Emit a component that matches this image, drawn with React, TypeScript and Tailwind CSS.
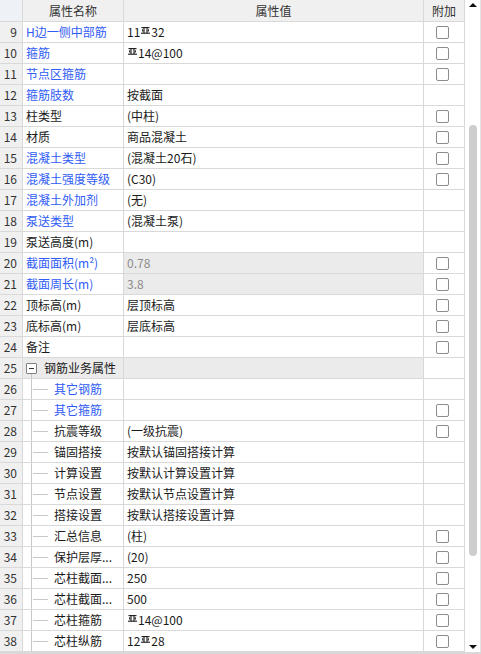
import React from "react";

type Part = string | { sym: true };
type Row = {
  n: number;
  name: string;
  blue?: boolean;
  value?: Part[];
  cb?: boolean;
  gray?: boolean;
  child?: boolean;
  group?: boolean;
};

const S: Part = { sym: true };

const rows: Row[] = [
  { n: 9, name: "H边一侧中部筋", blue: true, value: ["11", S, "32"], cb: true },
  { n: 10, name: "箍筋", blue: true, value: [S, "14@100"], cb: true },
  { n: 11, name: "节点区箍筋", blue: true, value: [], cb: true },
  { n: 12, name: "箍筋肢数", blue: true, value: ["按截面"] },
  { n: 13, name: "柱类型", value: ["(中柱)"], cb: true },
  { n: 14, name: "材质", value: ["商品混凝土"], cb: true },
  { n: 15, name: "混凝土类型", blue: true, value: ["(混凝土20石)"], cb: true },
  { n: 16, name: "混凝土强度等级", blue: true, value: ["(C30)"], cb: true },
  { n: 17, name: "混凝土外加剂", blue: true, value: ["(无)"] },
  { n: 18, name: "泵送类型", blue: true, value: ["(混凝土泵)"] },
  { n: 19, name: "泵送高度(m)", value: [] },
  { n: 20, name: "截面面积(m²)", blue: true, value: ["0.78"], gray: true, cb: true },
  { n: 21, name: "截面周长(m)", blue: true, value: ["3.8"], gray: true, cb: true },
  { n: 22, name: "顶标高(m)", value: ["层顶标高"], cb: true },
  { n: 23, name: "底标高(m)", value: ["层底标高"], cb: true },
  { n: 24, name: "备注", value: [], cb: true },
  { n: 25, name: "钢筋业务属性", group: true },
  { n: 26, name: "其它钢筋", blue: true, child: true, value: [] },
  { n: 27, name: "其它箍筋", blue: true, child: true, value: [], cb: true },
  { n: 28, name: "抗震等级", child: true, value: ["(一级抗震)"], cb: true },
  { n: 29, name: "锚固搭接", child: true, value: ["按默认锚固搭接计算"] },
  { n: 30, name: "计算设置", child: true, value: ["按默认计算设置计算"] },
  { n: 31, name: "节点设置", child: true, value: ["按默认节点设置计算"] },
  { n: 32, name: "搭接设置", child: true, value: ["按默认搭接设置计算"] },
  { n: 33, name: "汇总信息", child: true, value: ["(柱)"], cb: true },
  { n: 34, name: "保护层厚...", child: true, value: ["(20)"], cb: true },
  { n: 35, name: "芯柱截面...", child: true, value: ["250"], cb: true },
  { n: 36, name: "芯柱截面...", child: true, value: ["500"], cb: true },
  { n: 37, name: "芯柱箍筋", child: true, value: [S, "14@100"], cb: true },
  { n: 38, name: "芯柱纵筋", child: true, value: ["12", S, "28"], cb: true },
];

function RebarSym() {
  return (
    <svg
      width="9"
      height="7"
      viewBox="0 0 9 7"
      className="inline-block self-start mt-[5px] mx-[1px]"
      fill="none"
      stroke="#1a1a1a"
      strokeWidth="1.1"
    >
      <path d="M0.5 0.6H8.5" />
      <path d="M0 6.2H9" />
      <path d="M3 0.6V6.2" />
      <path d="M6 0.6V6.2" />
      <path d="M1.4 2.4L2 4.6" />
      <path d="M7.6 2.4L7 4.6" />
    </svg>
  );
}

function Checkbox() {
  return <div className="w-[13px] h-[13px] rounded-[2px] border border-[#8c8c8c] bg-white" />;
}

function NameCell({ r }: { r: Row }) {
  const color = r.blue ? "text-[#2f5cf5]" : "text-[#1a1a1a]";
  if (r.group) {
    return (
      <div className="w-[101px] shrink-0 border-r border-[#d9d9d9] bg-[#ebebeb] flex items-stretch">
        <div className="ml-[3px] w-[11px] flex flex-col items-center">
          <div className="h-[5px]" />
          <div className="w-[11px] h-[11px] border border-[#808080] bg-white rounded-[1px] flex items-center justify-center">
            <div className="w-[5px] h-px bg-[#333]" />
          </div>
          <div className="flex-1 w-px bg-[#c8c8c8]" />
        </div>
        <div className="ml-[7px] flex items-center text-[#1a1a1a] whitespace-nowrap">{r.name}</div>
      </div>
    );
  }
  if (r.child) {
    return (
      <div className="w-[101px] shrink-0 border-r border-[#d9d9d9] bg-white flex items-stretch">
        <div className="w-[8px]" />
        <div className="w-px bg-[#c8c8c8]" />
        <div className="flex items-center">
          <div className="ml-[1px] w-[15px] h-px bg-[#c8c8c8]" />
        </div>
        <div className={`ml-[6px] flex items-center whitespace-nowrap ${color}`}>{r.name}</div>
      </div>
    );
  }
  return (
    <div className={`w-[101px] shrink-0 border-r border-[#d9d9d9] bg-white pl-[3px] flex items-center whitespace-nowrap ${color}`}>
      {r.name}
    </div>
  );
}

function ValueCell({ r }: { r: Row }) {
  const bg = r.gray || r.group ? "bg-[#ebebeb]" : "bg-white";
  const color = r.gray ? "text-[#8c8c8c]" : "text-[#1a1a1a]";
  return (
    <div className={`w-[300px] shrink-0 border-r border-[#d9d9d9] pl-[3px] flex items-center whitespace-nowrap ${bg} ${color}`}>
      {(r.value || []).map((p, i) =>
        typeof p === "string" ? <span key={i}>{p}</span> : <RebarSym key={i} />
      )}
    </div>
  );
}

function DataRow({ r }: { r: Row }) {
  return (
    <div className="h-[21px] flex border-b border-[#d9d9d9] leading-[20px]">
      <div className="w-[23px] shrink-0 border-r border-[#d9d9d9] bg-[#f0f0f0] text-right pr-[5px] text-[#333]">
        {r.n}
      </div>
      <NameCell r={r} />
      <ValueCell r={r} />
      <div className="w-[41px] shrink-0 border-r border-[#d9d9d9] bg-white flex items-center">
        {r.cb ? (
          <div className="ml-[12px]">
            <Checkbox />
          </div>
        ) : null}
      </div>
    </div>
  );
}

export default function App() {
  return (
    <div className="w-[481px] h-[654px] flex bg-white overflow-hidden text-[12px] font-['Microsoft_YaHei','Noto_Sans_CJK_SC',sans-serif] border-b-2 border-[#d9d9d9]">
      <div className="w-[465px] shrink-0 flex flex-col">
        <div className="h-[22px] flex border-b border-[#d9d9d9] leading-[21px] text-[#333]">
          <div className="w-[23px] shrink-0 border-r border-[#d9d9d9] bg-[#eef1f6]" />
          <div className="w-[101px] shrink-0 border-r border-[#d9d9d9] bg-[#f0f0f0] text-center">属性名称</div>
          <div className="w-[300px] shrink-0 border-r border-[#d9d9d9] bg-[#f0f0f0] text-center">属性值</div>
          <div className="w-[41px] shrink-0 border-r border-[#d9d9d9] bg-[#f0f0f0] text-center">附加</div>
        </div>
        {rows.map((r) => (
          <DataRow key={r.n} r={r} />
        ))}
      </div>
      <div className="w-[16px] shrink-0 flex flex-col items-center border-r border-[#e3e3e3] bg-white">
        <svg width="8" height="4" viewBox="0 0 8 4" className="mt-[3px]">
          <path d="M0 4L4 0L8 4Z" fill="#111" />
        </svg>
        <div className="mt-[118px] h-[431px] w-[8px] rounded-full bg-[#cdcdcd]" />
        <div className="flex-1" />
        <svg width="8" height="4" viewBox="0 0 8 4" className="mb-[3px]">
          <path d="M0 0L8 0L4 4Z" fill="#111" />
        </svg>
      </div>
    </div>
  );
}
